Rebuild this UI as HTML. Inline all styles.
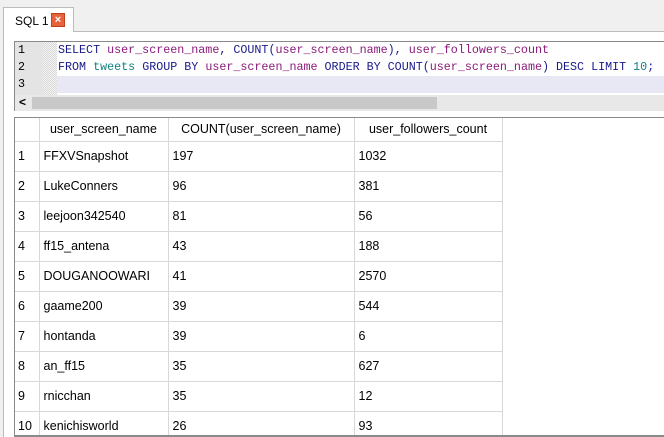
<!DOCTYPE html>
<html><head><style>
*{margin:0;padding:0;box-sizing:border-box}
body{width:664px;height:437px;overflow:hidden;background:#f0f0f0;font-family:"Liberation Sans","Noto Sans CJK JP",sans-serif;font-size:12px;color:#000;position:relative}
.tab{position:absolute;left:3px;top:7px;width:71px;height:25px;background:#fff;border:1px solid #bcbcbc;border-bottom:none}
.tab span{position:absolute;left:11px;top:6px;font-size:12px}
.x{position:absolute;left:47px;top:5px;width:14px;height:14px;background:#e8623c;border:1px solid #c04020;color:#fff;font-size:11px;font-weight:bold;line-height:12px;text-align:center}
.panel{position:absolute;left:3px;top:31px;width:661px;height:406px;background:#fff;border-left:1px solid #bcbcbc;border-top:1px solid #bcbcbc}
.ed{position:absolute;left:14px;top:41px;width:650px;height:70px;border:1px solid #8a8a8a;border-right:none;background:#fff}
.gut{position:absolute;left:0;top:0;width:28px;height:53px;background:#e4e4e4}
.dot{position:absolute;left:28px;top:0;width:14px;height:53px;background:repeating-conic-gradient(#d8d8d8 0 25%,#f4f4f4 0 50%) 0 0/2px 2px}
.ln{position:absolute;left:3px;font-family:"Liberation Mono",monospace;font-size:11.7px}
.code{position:absolute;left:43px;font-family:"Liberation Mono",monospace;font-size:11.7px;white-space:pre;color:#1a1a8a}
.cur{position:absolute;left:42px;top:34px;width:608px;height:17px;background:#e8e8f4}
.k{color:#1a1a8a}.i{color:#8a1a7a}.t{color:#108080}
.sb{position:absolute;left:0;top:53px;width:650px;height:16px;background:#e8e8e8}
.th{position:absolute;left:17px;top:2px;width:405px;height:12px;background:#c8c8c8}
.grid{position:absolute;left:14px;top:117px;width:650px;height:320px;border-top:1px solid #8a8a8a;border-left:1px solid #8a8a8a;border-bottom:2px solid #8a8a8a;overflow:hidden;background:#fff}
table{border-collapse:collapse;font-size:12.5px}
td{border-right:1px solid #d8d8d8;border-bottom:1px solid #d8d8d8;height:30px;padding-left:4px;white-space:nowrap}
tr.h td{height:23px;text-align:center;padding-left:0}
td.n{width:24px;padding-left:3px}
</style></head><body>
<div class="panel"></div>
<div class="tab"><span>SQL 1</span><div class="x">×</div></div>
<div class="ed">
<div class="gut"></div><div class="dot"></div><div class="cur"></div>
<div class="ln" style="top:1px">1</div><div class="ln" style="top:18px">2</div><div class="ln" style="top:35px">3</div>
<div class="code" style="top:1px"><span class="k">SELECT</span> <span class="i">user_screen_name</span>, <span class="k">COUNT</span>(<span class="i">user_screen_name</span>), <span class="i">user_followers_count</span></div>
<div class="code" style="top:18px"><span class="k">FROM</span> <span class="t">tweets</span> <span class="k">GROUP BY</span> <span class="i">user_screen_name</span> <span class="k">ORDER BY</span> <span class="k">COUNT</span>(<span class="i">user_screen_name</span>) <span class="k">DESC LIMIT</span> <span class="t">10</span>;</div>
<div class="sb"><span style="position:absolute;left:4px;top:0;font-size:12px;font-weight:bold">&lt;</span><div class="th"></div></div>
</div>
<div class="grid"><table>
<tr class="h"><td class="n"></td><td style="width:129px">user_screen_name</td><td style="width:186px">COUNT(user_screen_name)</td><td style="width:148px">user_followers_count</td></tr>
<tr><td class="n">1</td><td>FFXVSnapshot</td><td>197</td><td>1032</td></tr>
<tr><td class="n">2</td><td>LukeConners</td><td>96</td><td>381</td></tr>
<tr><td class="n">3</td><td>leejoon342540</td><td>81</td><td>56</td></tr>
<tr><td class="n">4</td><td>ff15_antena</td><td>43</td><td>188</td></tr>
<tr><td class="n">5</td><td>DOUGANOOWARI</td><td>41</td><td>2570</td></tr>
<tr><td class="n">6</td><td>gaame200</td><td>39</td><td>544</td></tr>
<tr><td class="n">7</td><td>hontanda</td><td>39</td><td>6</td></tr>
<tr><td class="n">8</td><td>an_ff15</td><td>35</td><td>627</td></tr>
<tr><td class="n">9</td><td>rnicchan</td><td>35</td><td>12</td></tr>
<tr><td class="n">10</td><td>kenichisworld</td><td>26</td><td>93</td></tr>
</table></div>
</body></html>
